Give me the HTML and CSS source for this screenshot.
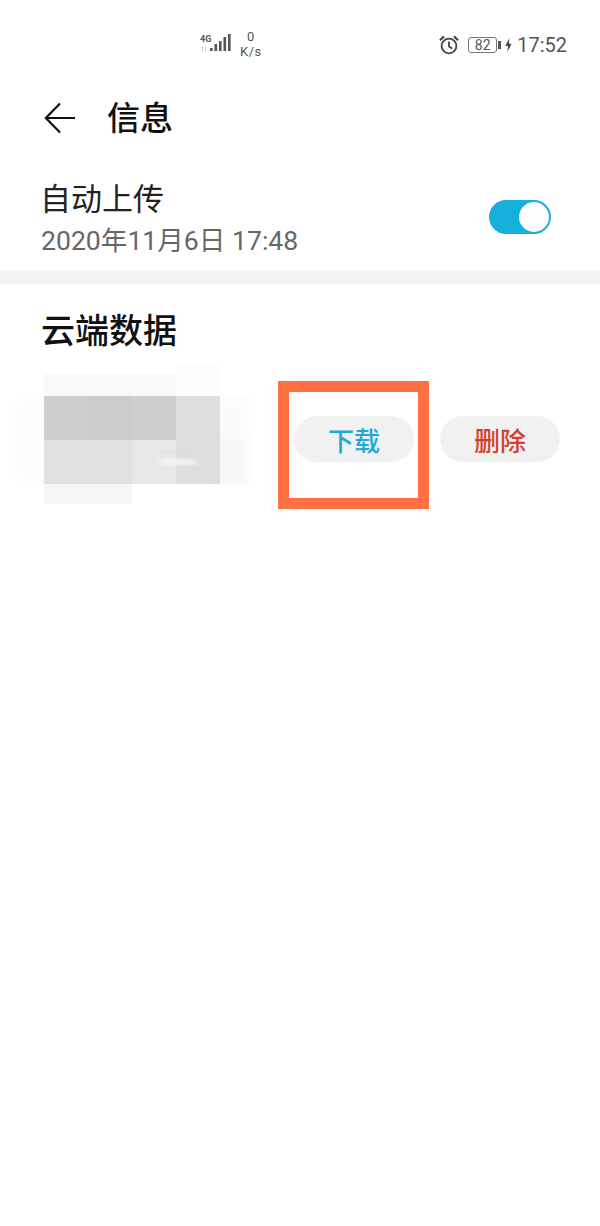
FILE: index.html
```html
<!DOCTYPE html>
<html lang="zh-CN">
<head>
    <meta charset="UTF-8">
    <meta name="viewport" content="width=device-width, initial-scale=1.0">
    <title>信息</title>
    <link rel="stylesheet" href="styles.css">
</head>
<body>
    <div class="status-bar">
        <div class="network">
            <svg class="signal" width="34" height="22" viewBox="0 0 34 22">
                <text x="1" y="9" class="signal-4g">4G</text>
                <text x="1" y="19" class="signal-1">1l</text>
                <rect x="11" y="15" width="2.6" height="3" fill="#555"/>
                <rect x="15.5" y="11" width="2.6" height="7" fill="#555"/>
                <rect x="20" y="8" width="2.6" height="10" fill="#555"/>
                <rect x="24.5" y="4" width="2.6" height="14" fill="#555"/>
                <rect x="29" y="1" width="2.6" height="17" fill="#555"/>
            </svg>
            <div class="speed"><span>0</span><span>K/s</span></div>
        </div>
        <div class="status-right">
            <svg width="22" height="22" viewBox="0 0 22 22" fill="none" stroke="#444" stroke-width="1.8">
                <circle cx="11" cy="12" r="7.4"/>
                <path d="M11 7.5V12.4L14.2 14.4"/>
                <path d="M2 6.2L6 2.4M20 6.2L16 2.4" stroke-width="2.2"/>
            </svg>
            <div class="battery"><div class="battery-body">82</div><div class="battery-cap"></div></div>
            <svg class="bolt" width="7" height="16" viewBox="0 0 8 16"><path d="M5 0L0.5 9H3.4L2.8 16L7.5 6.5H4.5Z" fill="#444"/></svg>
            <span class="time">17:52</span>
        </div>
    </div>

    <div class="header">
        <svg width="32" height="32" viewBox="0 0 32 32" fill="none" stroke="#111" stroke-width="2.2">
            <path d="M31 16H2M16 1.5L1.8 16L16 30.5"/>
        </svg>
        <h1>信息</h1>
    </div>

    <div class="setting">
        <div class="setting-text">
            <div class="setting-name">自动上传</div>
            <div class="setting-date">2020年11月6日 17:48</div>
        </div>
        <div class="toggle"><div class="knob"></div></div>
    </div>

    <div class="divider"></div>

    <h2>云端数据</h2>

    <div class="data-row">
        <svg class="mosaic" width="260" height="170" viewBox="0 0 260 170">
            <defs>
                <filter id="soft"><feGaussianBlur stdDeviation="3"/></filter>
                <filter id="softer"><feGaussianBlur stdDeviation="2"/></filter>
            </defs>
            <g filter="url(#soft)">
                <rect x="16" y="54" width="34" height="84" fill="#fcfcfc"/>
                <rect x="214" y="52" width="34" height="44" fill="#fafafa"/>
                <rect x="214" y="96" width="34" height="44" fill="#f7f7f7"/>
            </g>
            <rect x="44" y="30" width="132" height="22" fill="#f8f8f8"/>
            <rect x="176" y="20" width="44" height="32" fill="#fcfcfc"/>
            <rect x="44" y="52" width="44" height="44" fill="#cfcfcf"/>
            <rect x="88" y="52" width="44" height="44" fill="#cbcbcb"/>
            <rect x="132" y="52" width="44" height="44" fill="#cfcfcf"/>
            <rect x="176" y="52" width="44" height="44" fill="#dedede"/>
            <rect x="44" y="96" width="88" height="44" fill="#e1e1e1"/>
            <rect x="132" y="96" width="44" height="44" fill="#e8e8e8"/>
            <rect x="176" y="96" width="44" height="44" fill="#dedede"/>
            <rect x="44" y="140" width="88" height="20" fill="#f6f6f6"/>
            <ellipse cx="178" cy="118" rx="20" ry="3" fill="#f6f6f6" filter="url(#softer)"/>
            <rect x="160" y="107" width="34" height="2" fill="#d8d8d8" filter="url(#softer)"/>
        </svg>
        <button class="pill pill-download">下载</button>
        <button class="pill pill-delete">删除</button>
        <div class="highlight"></div>
    </div>
</body>
</html>
```

FILE: styles.css
```css
body {
    margin: 0;
    height: 1226px;
    background: #fff;
    overflow: hidden;
    font-family: Roboto, "Noto Sans CJK SC", sans-serif;
    color: #111;
}
.status-bar {
    height: 70px;
    display: flex;
    justify-content: space-between;
    padding: 18px 33px 0 199px;
    box-sizing: border-box;
    align-items: center;
    color: #555;
}
.network {
    display: flex;
    align-items: center;
    gap: 7px;
}
.signal-4g {
    font-size: 9px;
    font-weight: 700;
    fill: #555;
}
.signal-1 {
    font-size: 8px;
    fill: #bbb;
}
.speed {
    display: flex;
    flex-direction: column;
    align-items: center;
    font-size: 13px;
    line-height: 15px;
    letter-spacing: 0.5px;
}
.status-right {
    display: flex;
    align-items: center;
    margin-top: 2px;
}
.battery {
    display: flex;
    align-items: center;
    margin-left: 8px;
}
.battery-body {
    width: 27px;
    height: 14px;
    border: 1px solid #777;
    border-radius: 3px;
    font-size: 14px;
    line-height: 14px;
    text-align: center;
}
.battery-cap {
    width: 3px;
    height: 8px;
    margin-left: 1px;
    background: #555;
}
.bolt {
    margin-left: 4px;
}
.time {
    margin-left: 5px;
    font-size: 20px;
}
.header {
    height: 56px;
    margin-top: 20px;
    padding-left: 44px;
    display: flex;
    align-items: center;
}
h1 {
    margin: 2px 0 0 31px;
    font-size: 33px;
    font-weight: 500;
    line-height: 56px;
}
.setting {
    height: 90px;
    margin-top: 26px;
    padding: 0 49px 0 41px;
    display: flex;
    justify-content: space-between;
    align-items: center;
}
.setting-text {
    padding-top: 3px;
}
.setting-name {
    margin-left: -1px;
    font-size: 31px;
    line-height: 44px;
    color: #222;
}
.setting-date {
    margin-top: 1px;
    font-size: 26.6px;
    line-height: 36px;
    color: #666;
}
.toggle {
    width: 62px;
    height: 34px;
    box-sizing: border-box;
    padding: 2px;
    border-radius: 17px;
    background: #16aedb;
    display: flex;
    justify-content: flex-end;
}
.knob {
    width: 30px;
    height: 30px;
    border-radius: 50%;
    background: #fff;
}
.divider {
    height: 14px;
    margin-top: 8px;
    background: #f5f5f5;
}
h2 {
    margin: 25px 0 0 41px;
    font-size: 34px;
    font-weight: 500;
    line-height: 44px;
}
.data-row {
    position: relative;
    height: 170px;
    margin-top: -9px;
    display: flex;
    align-items: flex-start;
}
.mosaic {
    flex: none;
    margin-right: 34px;
}
.pill {
    width: 120px;
    height: 46px;
    margin-top: 72px;
    padding: 0;
    border: none;
    border-radius: 23px;
    background: #f1f1f1;
    font-family: "Noto Sans CJK SC", sans-serif;
    font-size: 26px;
    font-weight: 500;
}
.pill-download {
    color: #1fa9d8;
}
.pill-delete {
    margin-left: 26px;
    color: #d63f2c;
}
.highlight {
    position: absolute;
    left: 278px;
    top: 37px;
    width: 151px;
    height: 128px;
    box-sizing: border-box;
    border: 11px solid #ff7043;
}
```
